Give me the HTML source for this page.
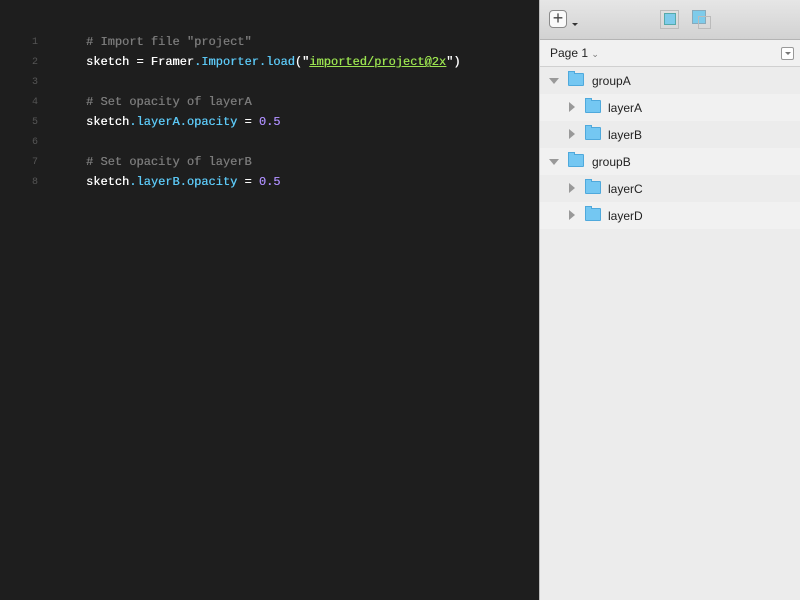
<!DOCTYPE html>
<html><head><style>
body{margin:0;width:800px;height:600px;overflow:hidden;background:#1e1e1e;font-family:"Liberation Sans",sans-serif;position:relative}
.code{position:absolute;left:0;top:0;width:539px;height:600px;background:#1e1e1e}
.ln{position:absolute;left:25px;width:20px;text-align:center;font:10px "Liberation Mono",monospace;color:#555}
.cl{position:absolute;left:86px;font:12px "Liberation Mono",monospace;color:#fff;white-space:pre;text-shadow:0.3px 0 0 currentColor}
.c{color:#7a7a7a}.b{color:#5cc8f5}.p{color:#a98bf5}.g{color:#9be350;text-decoration:underline}
.side{position:absolute;left:539px;top:0;width:261px;height:600px;background:#ececec;border-left:1px solid #bdbdbd;box-sizing:border-box}
.tb{height:39px;background:linear-gradient(#e6e6e6,#d2d2d2);border-bottom:1px solid #b4b4b4}
.pg{height:26px;background:#f1f1f1;border-bottom:1px solid #d0d0d0;font-size:12px;color:#222;position:relative}
.row{height:27px;position:relative;font-size:12px;color:#222}
.row span{position:absolute;top:7px}
.tri{position:absolute;width:0;height:0}
.fold{position:absolute;top:6px;width:16px;height:13px;background:#74c7f2;border:1px solid #4fa9dc;box-sizing:border-box;border-radius:1px}
.fold:before{content:"";position:absolute;left:-1px;top:-3px;width:7px;height:3px;background:#74c7f2;border:1px solid #4fa9dc;border-bottom:none;box-sizing:border-box}
</style></head><body>
<div class="code">
<div class="ln" style="top:37px">1</div><div class="cl c" style="top:35px"># Import file "project"</div>
<div class="ln" style="top:57px">2</div><div class="cl" style="top:55px">sketch = Framer<span class="b">.Importer.load</span>("<span class="g">imported/project@2x</span>")</div>
<div class="ln" style="top:77px">3</div>
<div class="ln" style="top:97px">4</div><div class="cl c" style="top:95px"># Set opacity of layerA</div>
<div class="ln" style="top:117px">5</div><div class="cl" style="top:115px">sketch<span class="b">.layerA.opacity</span> = <span class="p">0.5</span></div>
<div class="ln" style="top:137px">6</div>
<div class="ln" style="top:157px">7</div><div class="cl c" style="top:155px"># Set opacity of layerB</div>
<div class="ln" style="top:177px">8</div><div class="cl" style="top:175px">sketch<span class="b">.layerB.opacity</span> = <span class="p">0.5</span></div>
</div>
<div class="side">
<div class="tb" style="position:relative">
<div style="position:absolute;left:9px;top:10px;width:18px;height:18px;border:1px solid #8a8a8a;border-radius:4px;background:#fafafa;box-sizing:border-box;font-size:18px;line-height:15px;text-align:center;color:#444">+</div>
<div style="position:absolute;left:32px;top:23px;border-left:3px solid transparent;border-right:3px solid transparent;border-top:3px solid #333"></div>
<div style="position:absolute;left:120px;top:10px;width:19px;height:19px;border:1px solid #bbb;box-sizing:border-box"></div>
<div style="position:absolute;left:124px;top:13px;width:10px;height:10px;background:#7ecbea;border:1px solid #5aa"></div>
<div style="position:absolute;left:152px;top:10px;width:12px;height:12px;background:#7ecbea;border:1px solid #8ab"></div>
<div style="position:absolute;left:158px;top:16px;width:13px;height:13px;border:1px solid #bbb;box-sizing:border-box"></div>
</div>
<div class="pg"><span style="position:absolute;left:10px;top:6px">Page 1 <span style="color:#777;font-size:9px">&#8964;</span></span>
<div style="position:absolute;right:6px;top:7px;width:13px;height:13px;border:1px solid #999;border-radius:2px;box-sizing:border-box;background:#fff"><div style="position:absolute;left:3px;top:4px;border-left:3px solid transparent;border-right:3px solid transparent;border-top:3px solid #777"></div></div></div>
<div class="row" style="background:#ececec"><div class="tri" style="left:9px;top:11px;border-left:5px solid transparent;border-right:5px solid transparent;border-top:6px solid #999"></div><div class="fold" style="left:28px"></div><span style="left:52px">groupA</span></div>
<div class="row" style="background:#f1f1f1"><div class="tri" style="left:29px;top:8px;border-top:5px solid transparent;border-bottom:5px solid transparent;border-left:6px solid #999"></div><div class="fold" style="left:45px"></div><span style="left:68px">layerA</span></div>
<div class="row" style="background:#ececec"><div class="tri" style="left:29px;top:8px;border-top:5px solid transparent;border-bottom:5px solid transparent;border-left:6px solid #999"></div><div class="fold" style="left:45px"></div><span style="left:68px">layerB</span></div>
<div class="row" style="background:#f1f1f1"><div class="tri" style="left:9px;top:11px;border-left:5px solid transparent;border-right:5px solid transparent;border-top:6px solid #999"></div><div class="fold" style="left:28px"></div><span style="left:52px">groupB</span></div>
<div class="row" style="background:#ececec"><div class="tri" style="left:29px;top:8px;border-top:5px solid transparent;border-bottom:5px solid transparent;border-left:6px solid #999"></div><div class="fold" style="left:45px"></div><span style="left:68px">layerC</span></div>
<div class="row" style="background:#f1f1f1"><div class="tri" style="left:29px;top:8px;border-top:5px solid transparent;border-bottom:5px solid transparent;border-left:6px solid #999"></div><div class="fold" style="left:45px"></div><span style="left:68px">layerD</span></div>
</div>
</body></html>
